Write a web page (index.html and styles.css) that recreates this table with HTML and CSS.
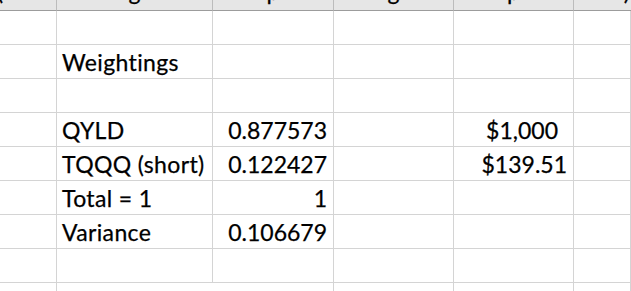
FILE: index.html
```html
<!DOCTYPE html>
<html>
<head>
<meta charset="utf-8">
<link rel="stylesheet" href="styles.css">
</head>
<body>
<div class="sheet">
  <div class="hdr"><span class="frag frag-a">(</span></div>
  <div class="hdr"><span class="frag">g</span></div>
  <div class="hdr"><span class="frag">p</span></div>
  <div class="hdr"><span class="frag">g</span></div>
  <div class="hdr"><span class="frag">p</span></div>
  <div class="hdr"><span class="frag frag-f">)</span></div>

  <div class="c"></div><div class="c"></div><div class="c"></div><div class="c"></div><div class="c"></div><div class="c"></div>

  <div class="c"></div><div class="c label">Weightings</div><div class="c"></div><div class="c"></div><div class="c"></div><div class="c"></div>

  <div class="c"></div><div class="c"></div><div class="c"></div><div class="c"></div><div class="c"></div><div class="c"></div>

  <div class="c"></div><div class="c label">QYLD</div><div class="c num">0.877573</div><div class="c"></div><div class="c num acct">$1,000</div><div class="c"></div>

  <div class="c"></div><div class="c label">TQQQ (short)</div><div class="c num">0.122427</div><div class="c"></div><div class="c num">$139.51</div><div class="c"></div>

  <div class="c"></div><div class="c label">Total = 1</div><div class="c num">1</div><div class="c"></div><div class="c"></div><div class="c"></div>

  <div class="c"></div><div class="c label">Variance</div><div class="c num">0.106679</div><div class="c"></div><div class="c"></div><div class="c"></div>

  <div class="c"></div><div class="c"></div><div class="c"></div><div class="c"></div><div class="c"></div><div class="c"></div>

  <div class="c"></div><div class="c open"></div><div class="c"></div><div class="c"></div><div class="c"></div><div class="c"></div>
</div>
</body>
</html>
```
FILE: styles.css
```css
html, body {
  margin: 0;
  padding: 0;
  background: #ffffff;
  overflow: hidden;
}

.sheet {
  display: grid;
  grid-template-columns: 57px 156px 121px 120px 120px 1fr;
  grid-template-rows: 11px repeat(8, 34px) 34px;
  width: 631px;
  height: 291px;
  overflow: hidden;
  font-family: "Lato", "Open Sans", sans-serif;
  font-size: 23px;
  color: #000000;
  -webkit-text-stroke: 0.25px #000;
}

.hdr {
  box-sizing: border-box;
  background: #e6e6e6;
  border-right: 1px solid #bcbcbc;
  border-bottom: 1px solid #9c9c9c;
  overflow: hidden;
  display: flex;
  justify-content: center;
}

.hdr:nth-child(6) {
  border-right: none;
}

.frag {
  display: block;
  line-height: 22px;
  margin-top: -20px;
  font-size: 23px;
  color: #000;
}

.frag-a {
  margin-right: auto;
  margin-left: -3px;
}

.frag-f {
  margin-left: auto;
  margin-right: 1px;
}

.c {
  box-sizing: border-box;
  border-right: 1px solid #d4d4d4;
  border-bottom: 1px solid #d4d4d4;
  line-height: 33px;
  padding: 1px 6px 0 5px;
  white-space: nowrap;
  overflow: hidden;
}

.label {
  letter-spacing: 0.35px;
}

.num {
  text-align: right;
}

.acct {
  padding-right: 15px;
}

.open {
  border-right-color: transparent;
}
```
